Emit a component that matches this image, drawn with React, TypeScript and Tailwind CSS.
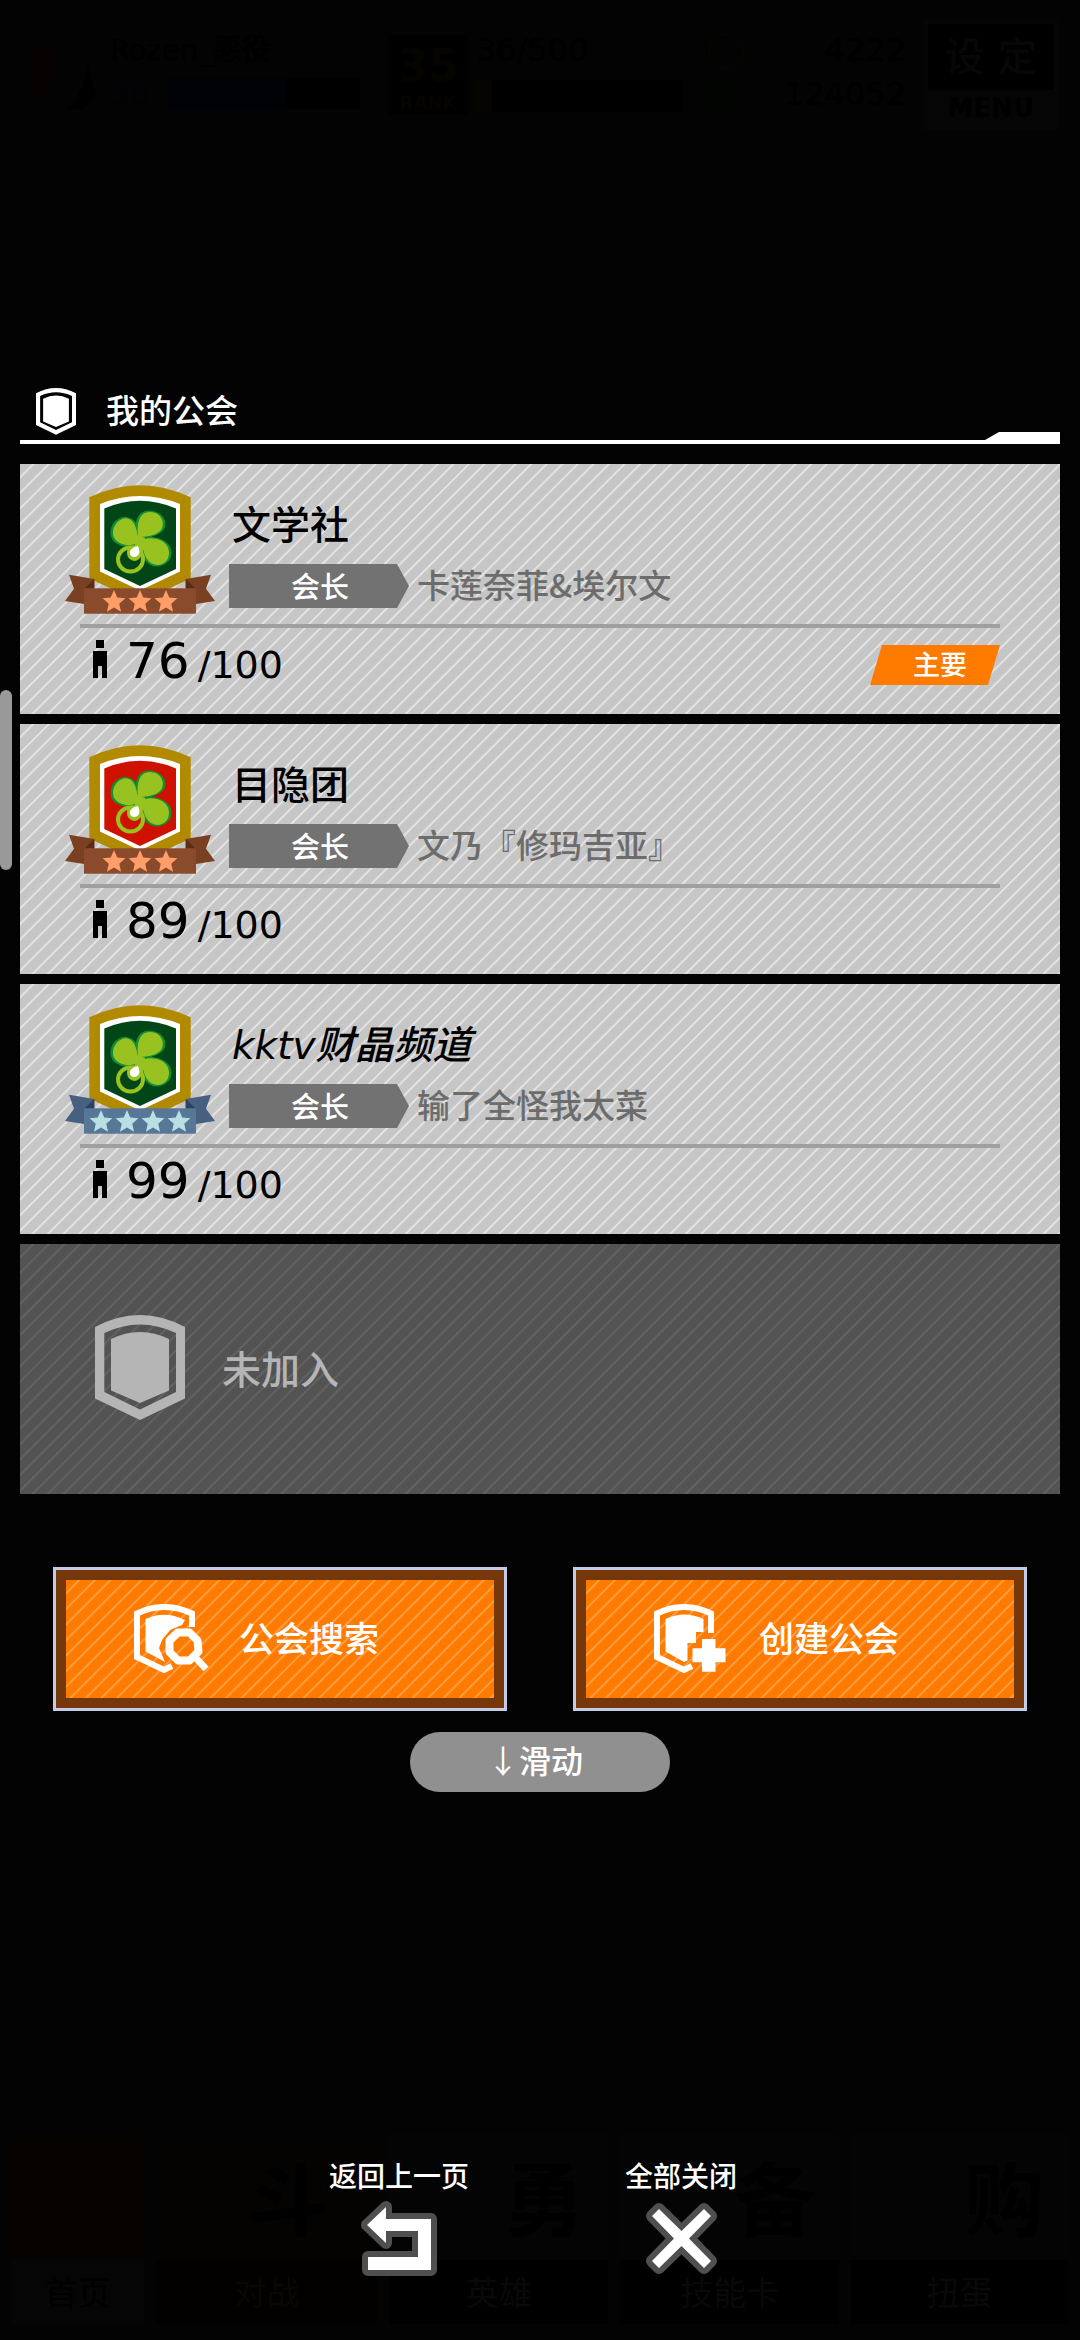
import React from "react";

const CJK = "font-['Noto_Sans_CJK_SC',sans-serif]";
const MIXED = "font-['DejaVu_Sans','Noto_Sans_CJK_SC',sans-serif]";

type Ribbon = { front: string; tail: string; fold: string; star: string };

const BRONZE: Ribbon = { front: "#8a4b2c", tail: "#7a4022", fold: "#5c2c16", star: "#ff9e66" };
const STEEL: Ribbon = { front: "#577797", tail: "#48607f", fold: "#2f4160", star: "#b9dfe4" };

type Guild = {
  name: string;
  italic?: boolean;
  leader: string;
  members: number;
  main?: boolean;
  field: string;
  ribbon: Ribbon;
  stars: number[];
};

const GUILDS: Guild[] = [
  { name: "文学社", leader: "卡莲奈菲&埃尔文", members: 76, main: true, field: "#024617", ribbon: BRONZE, stars: [49, 75, 101] },
  { name: "目隐团", leader: "文乃『修玛吉亚』", members: 89, field: "#cf1100", ribbon: BRONZE, stars: [49, 75, 101] },
  { name: "kktv财晶频道", italic: true, leader: "输了全怪我太菜", members: 99, field: "#024617", ribbon: STEEL, stars: [36, 62, 88, 114] },
];

function Star({ x, y, r, fill }: { x: number; y: number; r: number; fill: string }) {
  const pts = Array.from({ length: 10 }, (_, i) => {
    const a = -Math.PI / 2 + (i * Math.PI) / 5;
    const d = i % 2 === 0 ? r : r * 0.46;
    return `${(x + d * Math.cos(a)).toFixed(2)},${(y + d * Math.sin(a)).toFixed(2)}`;
  });
  return <polygon points={pts.join(" ")} fill={fill} />;
}

const LEAVES =
  "M72 59 C64 64 48 60 48 49 C48 38 60 30 67 37 C72 42 73 52 72 59Z " +
  "M73 53 C72 44 72 28 85 28 C96 28 101 39 96 46 C91 52 80 53 73 53Z " +
  "M78 56 C86 52 104 55 104 69 C104 79 94 84 86 79 C79 74 77 64 78 56Z";

function GuildBadge({ field, ribbon, stars }: Pick<Guild, "field" | "ribbon" | "stars">) {
  return (
    <svg viewBox="0 0 150 131" className="w-[150px] shrink-0 self-start" aria-hidden="true">
      <path d="M24.3 13.3 Q75 -10.7 125.7 13.3 V94.5 L75 118 L24.3 94.5Z" fill="#b28a00" />
      <path d="M35 20 Q75 4 115 20 V87.5 L75 106.5 L35 87.5Z" fill="#fff" />
      <path d="M39.3 24.5 Q75 9 111 24.5 V85 L75 102 L39.3 85Z" fill={field} />
      <path d={LEAVES} fill="#109035" stroke="#109035" strokeWidth="3" transform="translate(-1 0)" />
      <path d={LEAVES} fill="#109035" stroke="#109035" strokeWidth="1" transform="translate(2 0)" />
      <path d={LEAVES} fill="#97c220" />
      <path d="M70 50 L80 54 L82 60 L76 70 L70 62Z" fill="#97c220" />
      <ellipse cx="65.500" cy="75.500" rx="12.500" ry="12" fill="none" stroke="#97c220" strokeWidth="4" />
      <path d="M64 62 C60 68 62 76 69 77 C75 77 79 70 78 60Z" fill="#97c220" />
      <path d="M73 62 C68 63 64 66 65 70 C66 74 72 74 74 70 C75 67 74 65 73 62Z" fill="#fff" />
      <path d="M4 90.700 L29.300 95 V120 H19 L0 117 L9 104.700Z M146 90.700 L120.700 95 V120 H131 L150 117 L141 104.700Z" fill={ribbon.tail} />
      <path d="M19.300 104.500 L29.300 95 V104.500Z M130.700 104.500 L120.700 95 V104.500Z" fill={ribbon.fold} />
      <rect x="19" y="104.300" width="112" height="25.400" fill={ribbon.front} />
      {stars.map((x) => (
        <Star key={x} x={x} y={118} r={12} fill={ribbon.star} />
      ))}
    </svg>
  );
}

function ShieldIcon({ className }: { className: string }) {
  return (
    <svg viewBox="0 0 90 105" className={className} fill="currentColor" aria-hidden="true">
      <path
        fillRule="evenodd"
        d="M0 12 Q45 -12 90 12 V83.500 L45 105 L0 83.500Z M9.300 18 Q45 1 81 18 V77 L45 94.600 L9.300 77Z"
      />
      <path d="M16 24 Q45 10 74 24 V75.500 L45 88 L16 75.500Z" />
    </svg>
  );
}

function SearchGuildIcon() {
  return (
    <svg viewBox="0 0 75 70" className="w-[75px] shrink-0" fill="none" aria-hidden="true">
      <path d="M58 23 V9.500 Q30 -3.500 3 9.500 V53 L30 66 L38 62" stroke="#fff" strokeWidth="6" />
      <path d="M11.500 15 Q31 6 51 16 L48 21 L36 26 L28 36 L25 44 L31 58 L11.500 47.500Z" fill="#fff" />
      <path d="M43.800 28.500 L55.500 28.500 L63.500 36.500 L64.500 47.500 L55.500 56.500 L44 56.500 L35.500 48 L35.500 36.500Z" stroke="#fff" strokeWidth="8" strokeLinejoin="round" />
      <path d="M61 53 L72 65" stroke="#fff" strokeWidth="7" />
    </svg>
  );
}

function CreateGuildIcon() {
  return (
    <svg viewBox="0 0 75 70" className="w-[75px] shrink-0" fill="none" aria-hidden="true">
      <path d="M57 29 V9.500 Q30 -3.500 3 9.500 V53 L30 66 L38 62" stroke="#fff" strokeWidth="6" />
      <path d="M11.500 15 Q30 6 49.500 15 V28 H42 V39 H33.500 V56.500 L30 58 L11.500 47.500Z" fill="#fff" />
      <path d="M48 35 H61.500 V44.300 H71.500 V58.300 H61.500 V67.700 H48 V58.300 H38.500 V44.300 H48Z" fill="#fff" />
    </svg>
  );
}

function PersonIcon() {
  return (
    <svg viewBox="0 0 14 38" className="mb-[8px] w-[14px]" aria-hidden="true">
      <path d="M3 0 H11 V8 H3Z M0 11 H14 V38 H9 V26 H5 V38 H0Z" fill="#000" />
    </svg>
  );
}

const STRIPES = "bg-[repeating-linear-gradient(135deg,#c6c6c6_0px,#c6c6c6_8px,#e2e2e2_9px,#e2e2e2_10px,#c6c6c6_11px)]";
const STRIPES_DARK = "bg-[repeating-linear-gradient(135deg,#535353_0px,#535353_8px,#626262_9px,#626262_10px,#535353_11px)]";
const STRIPES_ORANGE = "bg-[repeating-linear-gradient(135deg,#ff7b00_0px,#ff7b00_8px,#ff9d42_9px,#ff9d42_10px,#ff7b00_11px)]";

function GuildCard({ guild }: { guild: Guild }) {
  return (
    <li className={`flex h-[250px] flex-col pt-[20px] pr-[60px] pl-[60px] ${STRIPES}`}>
      <div className="-ml-[15px] flex h-[140px]">
        <GuildBadge field={guild.field} ribbon={guild.ribbon} stars={guild.stars} />
        <div className="ml-[14px] flex flex-1 flex-col pt-[16px]">
          <h2 className={`pl-[3px] text-[39px] leading-[52px] font-medium text-black ${guild.italic ? "italic" : ""} ${MIXED}`}>{guild.name}</h2>
          <div className="mt-[12px] flex items-start gap-[8px]">
            <span className={`h-[44px] w-[180px] bg-[#727272] pl-[2px] text-center text-[29px] leading-[42px] font-medium text-white [clip-path:polygon(0_0,168px_0,100%_50%,168px_100%,0_100%)] ${CJK}`}>会长</span>
            <span className={`text-[33px] leading-[40px] font-medium text-[#6c6c6c] ${CJK}`}>{guild.leader}</span>
          </div>
        </div>
      </div>
      <div className="h-[4px] bg-[#9f9f9f]" />
      <div className="flex items-start justify-between">
        <div className="flex items-center pt-[4px] pl-[13px]">
          <PersonIcon />
          <p className="ml-[19px] font-['DejaVu_Sans',sans-serif] text-[50px] leading-[58px] text-black">
            {guild.members}
            <span className="ml-[8px] text-[38px]">/100</span>
          </p>
        </div>
        {guild.main && (
          <span className={`mt-[17px] h-[40px] w-[130px] bg-[#ff7b00] pl-[10px] text-center text-[27px] leading-[38px] font-medium text-white [clip-path:polygon(12px_0,100%_0,118px_100%,0_100%)] ${CJK}`}>
            主要
          </span>
        )}
      </div>
    </li>
  );
}

function ActionButton({ icon, label }: { icon: React.ReactNode; label: string }) {
  return (
    <button type="button" className="flex-1 border-[3px] border-[#c3cbe6] bg-[#76380b] p-[10px]">
      <span className={`flex h-[118px] items-center gap-[30px] pl-[68px] text-[35px] font-medium text-white ${STRIPES_ORANGE} ${CJK}`}>
        {icon}
        <span className="pb-[4px] whitespace-nowrap">{label}</span>
      </span>
    </button>
  );
}

function StatusBar() {
  return (
    <header className={`flex h-[140px] items-start pt-[20px] pr-[22px] pl-[20px] text-[32px] leading-[44px] text-black ${MIXED}`}>
      <svg viewBox="0 0 80 90" className="mt-[14px] w-[80px]" aria-hidden="true">
        <path d="M2 10 L34 8 L33 42 L22 66 L8 76 L14 38Z" fill="#070202" />
        <path d="M46 76 Q62 64 68 30 L76 60 Q70 78 46 76Z" fill="#000" />
      </svg>
      <div className="ml-[10px] w-[250px] pt-[8px]">
        <p className="text-[29px] font-medium whitespace-nowrap">Rozen_悪役</p>
        <div className="flex items-center gap-[16px]">
          <span className="text-[#000208]">56</span>
          <span className="h-[32px] flex-1 bg-[linear-gradient(90deg,#000206_62%,#000_62%)]" />
        </div>
      </div>
      <div className="mt-[14px] ml-[28px] flex h-[80px] w-[80px] flex-col items-center justify-end bg-black text-[#060401]">
        <span className="text-[44px] leading-[52px] font-bold">35</span>
        <span className="text-[18px] leading-[22px] font-bold">RANK</span>
      </div>
      <div className="ml-[8px] flex-1 pt-[8px]">
        <p>36/500</p>
        <div className="mt-[8px] h-[32px] bg-[linear-gradient(90deg,#050400_8%,#000_8%)]" />
      </div>
      <svg viewBox="0 0 40 90" className="mt-[10px] ml-[24px] w-[40px]" aria-hidden="true">
        <circle cx="20" cy="21" r="17" fill="none" stroke="#060401" strokeWidth="4" />
        <rect x="4" y="50" width="32" height="38" rx="3" fill="#010400" />
      </svg>
      <div className="w-[160px] pt-[8px] text-right">
        <p>4222</p>
        <p>124052</p>
      </div>
      <button type="button" className="ml-[18px] w-[134px] border-4 border-[#050505] bg-[#050505] text-black">
        <span className="block bg-black text-[40px] leading-[66px] font-medium text-[#070707]">设 定</span>
        <span className="block text-[26px] leading-[36px] font-bold">MENU</span>
      </button>
    </header>
  );
}

const TABS = [
  { label: "首页", glyph: "", grow: "flex-[131]", tone: "bg-[#050200]", foot: "bg-[#050505] text-black" },
  { label: "对战", glyph: "斗", grow: "flex-[221]", tone: "bg-[#040302]", foot: "bg-[#020100] text-[#080705]" },
  { label: "英雄", glyph: "勇", grow: "flex-[218]", tone: "bg-[#040404]", foot: "bg-black text-[#090909]" },
  { label: "技能卡", glyph: "备", grow: "flex-[218]", tone: "bg-[#040404]", foot: "bg-black text-[#090909]" },
  { label: "扭蛋", glyph: "购", grow: "flex-[216]", tone: "bg-[#040404]", foot: "bg-black text-[#090909]" },
];

function TabBar() {
  return (
    <nav className={`flex gap-[12px] px-[12px] pb-[16px] ${CJK}`}>
      {TABS.map((t) => (
        <a key={t.label} href="#" className={`flex flex-col ${t.grow} ${t.tone}`}>
          <span className={`h-[126px] text-right text-[80px] leading-[120px] font-bold text-black ${t.glyph === "斗" ? "pr-[50px]" : "pr-[24px]"}`}>{t.glyph}</span>
          <span className={`h-[64px] text-center text-[33px] leading-[62px] ${t.foot}`}>{t.label}</span>
        </a>
      ))}
    </nav>
  );
}

function BackIcon() {
  const d = "M25 7 V19 H70 V70 H7 V57 H57 V31 H25 V43 L6 25Z";
  return (
    <svg viewBox="0 0 77 77" className="w-[77px]" aria-hidden="true">
      <path d={d} fill="none" stroke="#4f4f4f" strokeWidth="12" strokeLinejoin="round" />
      <path d={d} fill="#fff" />
    </svg>
  );
}

function CloseIcon() {
  const d = "M16 9 L38.500 31 L61 9 L68 16 L46 38.500 L68 61 L61 68 L38.500 46 L16 68 L9 61 L31 38.500 L9 16Z";
  return (
    <svg viewBox="0 0 77 77" className="w-[77px]" aria-hidden="true">
      <path d={d} fill="none" stroke="#4f4f4f" strokeWidth="12" strokeLinejoin="round" />
      <path d={d} fill="#fff" />
    </svg>
  );
}

export default function App() {
  return (
    <div className="relative flex min-h-screen flex-col bg-[#030303]">
      <StatusBar />
      <main className="mt-[244px] px-[20px]">
        <div className="flex h-[60px] items-start border-b-4 border-white pl-[16px]">
          <ShieldIcon className="mt-[4px] w-[40px] text-white" />
          <h1 className={`ml-[30px] flex-1 text-[33px] leading-[50px] font-medium text-white ${CJK}`}>我的公会</h1>
          <div className="h-[8px] w-[75px] self-end bg-white [clip-path:polygon(14px_0,100%_0,100%_100%,0_100%)]" />
        </div>
        <ul className="mt-[20px] flex flex-col gap-[10px]">
          {GUILDS.map((g) => (
            <GuildCard key={g.name} guild={g} />
          ))}
          <li className={`flex h-[250px] items-center gap-[37px] pb-[4px] pl-[75px] text-[#b5b5b5] ${STRIPES_DARK}`}>
            <ShieldIcon className="w-[90px]" />
            <span className={`text-[39px] leading-[52px] font-medium ${CJK}`}>未加入</span>
          </li>
        </ul>
        <div className="mt-[73px] flex gap-[66px] px-[33px]">
          <ActionButton icon={<SearchGuildIcon />} label="公会搜索" />
          <ActionButton icon={<CreateGuildIcon />} label="创建公会" />
        </div>
        <button type="button" className={`mx-auto mt-[21px] block h-[60px] w-[260px] rounded-full bg-[#909090] pr-[10px] pb-[6px] text-center text-[32px] leading-[52px] text-white ${CJK}`}>
          ↓<span className="font-medium">滑动</span>
        </button>
      </main>
      <div className="mt-auto">
        <TabBar />
      </div>
      <div className="absolute inset-x-0 bottom-[63px] flex justify-center gap-[82px]">
        {[
          { label: "返回上一页", icon: <BackIcon /> },
          { label: "全部关闭", icon: <CloseIcon /> },
        ].map((b) => (
          <button key={b.label} type="button" className={`flex w-[200px] flex-col items-center text-[28px] leading-[40px] font-medium text-white ${CJK}`}>
            <span className="mb-[5px]">{b.label}</span>
            {b.icon}
          </button>
        ))}
      </div>
      <div className="absolute top-[690px] left-0 h-[180px] w-[12px] rounded-[6px] bg-[#999999]" />
    </div>
  );
}
